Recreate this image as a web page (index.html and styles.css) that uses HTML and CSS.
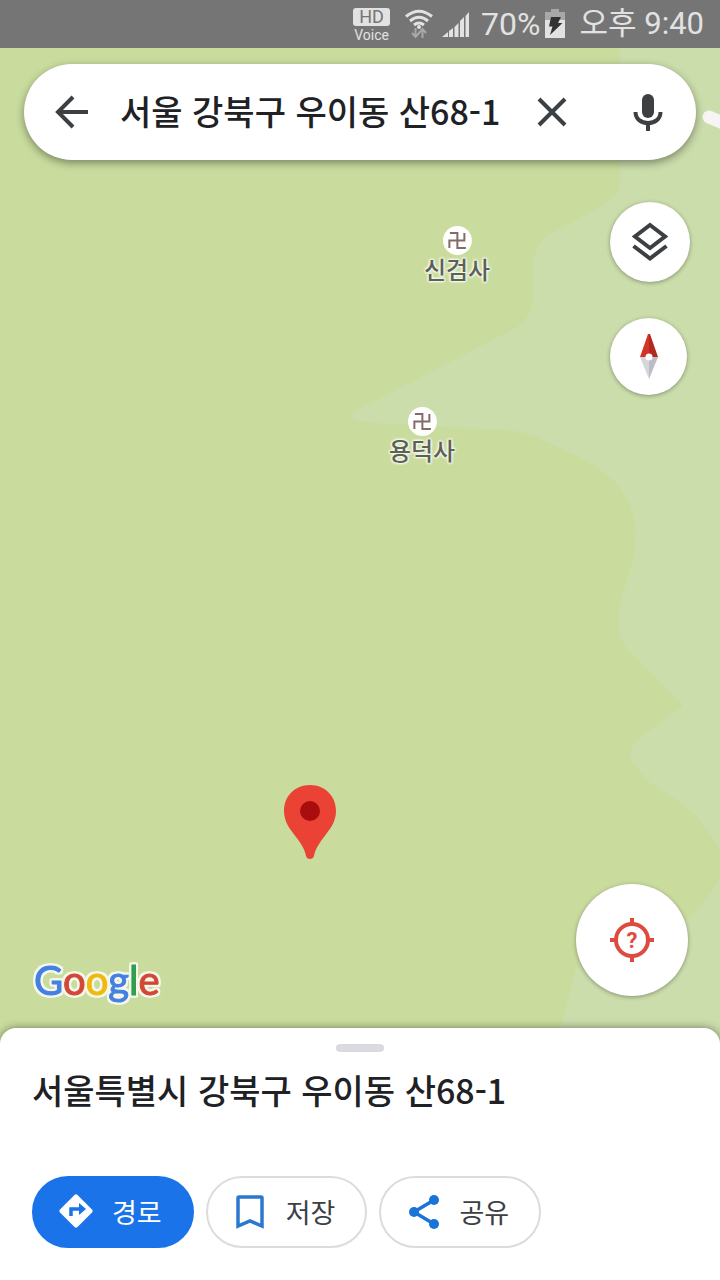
FILE: index.html
```html
<!DOCTYPE html>
<html lang="ko">
<head>
<meta charset="UTF-8" />
<meta name="viewport" content="width=device-width, initial-scale=1.0"/>
<title>서울 강북구 우이동 산68-1</title>
<link rel="stylesheet" href="styles.css">
</head>
<body>

<header class="status-bar">
    <div class="hd-voice">
        <span class="hd">HD</span>
        <span class="voice">Voice</span>
    </div>
    <svg class="status-wifi" viewBox="0 0 30 32" width="30" height="32" aria-hidden="true">
        <g fill="none" stroke="#e2e2e2" stroke-width="3">
            <path d="M2 8.500Q15 -2 28 8.500"/>
            <path d="M6 13Q15 5.500 24 13"/>
            <path d="M10 17Q15 13 20 17"/>
        </g>
        <circle cx="15" cy="19" r="2" fill="#e2e2e2"/>
        <path d="M11.500 20v8M8 25l3.500 4 3.500-4M18.500 30v-8M15 25l3.500-4 3.500 4" fill="none" stroke="#a8a8a8" stroke-width="2"/>
    </svg>
    <svg class="status-signal" viewBox="0 0 28 28" width="28" height="28" aria-hidden="true">
        <path d="M0 27l6-5v5zM7 21l4-3v9H7zM12.500 17l4-4v14h-4zM18 11l4-4v20h-4zM23.500 6L27 2v25h-3.500z" fill="#e2e2e2"/>
    </svg>
    <span>70%</span>
    <svg class="status-battery" viewBox="0 0 20 30" width="20" height="30" aria-hidden="true">
        <path d="M6 0h8v3h6v8H0V3h6z" fill="#a8a8a8"/>
        <path d="M0 11h20v18H0z" fill="#e2e2e2"/>
        <path d="M6 8h10l-3 6h4.500L5 26l2.500-8.500H4z" fill="#333"/>
    </svg>
    <span class="status-time">오후 9:40</span>
</header>

<main class="map">
    <svg class="map-terrain" viewBox="0 48 720 1000" preserveAspectRatio="xMidYMid slice" aria-hidden="true">
        <rect y="48" width="720" height="1000" fill="#c9dc9e"/>
        <path d="M620 48V178Q622 196 600 207L560 229Q532 240 533 270C534 300 536 318 510 331L350 414Q348 420 375 423L480 429Q525 428 545 441L585 460Q630 484 635 525C639 565 619 590 618 620Q616 638 632 653L683 706 645 734Q623 748 634 764L650 783Q692 808 704 825L720 850V48Z" fill="#cbddab"/>
        <path d="M720 878Q708 900 690 917Q640 950 576 968L556 1048H720Z" fill="#cbddab"/>
        <path d="M709 117l14 6" stroke="#f7f4f4" stroke-width="13" stroke-linecap="round"/>
    </svg>

    <div class="place place-singeomsa">
        <svg viewBox="0 0 29 29" width="29" height="29" aria-hidden="true">
            <circle cx="14.500" cy="14.500" r="14.500" fill="#fff"/>
            <path d="M7 7h7.500v15H23M6.500 22v-7.500h15V7" fill="none" stroke="#836b68" stroke-width="2"/>
        </svg>
        <span>신검사</span>
    </div>
    <div class="place place-yongdeoksa">
        <svg viewBox="0 0 29 29" width="29" height="29" aria-hidden="true">
            <circle cx="14.500" cy="14.500" r="14.500" fill="#fff"/>
            <path d="M7 7h7.500v15H23M6.500 22v-7.500h15V7" fill="none" stroke="#836b68" stroke-width="2"/>
        </svg>
        <span>용덕사</span>
    </div>

    <svg class="pin" viewBox="0 0 54 76" width="54" height="76" aria-hidden="true">
        <path d="M27 1C12 1 1 12 1 27c0 11 6 18 12 26 6 8 9 13 10 19 1 4 7 4 8 0 1-6 4-11 10-19 6-8 12-15 12-26C53 12 42 1 27 1z" fill="#ea4335"/>
        <circle cx="27" cy="27" r="10" fill="#a90d0d"/>
    </svg>

    <form class="search">
        <button class="icon-button" type="button" aria-label="뒤로">
            <svg viewBox="0 0 34 34" width="34" height="34"><path d="M33 17H3M18 2L3 17l15 15" fill="none" stroke="#3c4043" stroke-width="4"/></svg>
        </button>
        <input class="search-input" type="text" aria-label="검색" value="서울 강북구 우이동 산68-1">
        <button class="icon-button" type="button" aria-label="지우기">
            <svg viewBox="0 0 30 30" width="30" height="30"><path d="M2 2l26 26M28 2L2 28" stroke="#3c4043" stroke-width="4"/></svg>
        </button>
        <button class="icon-button" type="button" aria-label="음성 검색">
            <svg viewBox="0 0 30 40" width="30" height="40">
                <rect x="9" y="2" width="12" height="24" rx="6" fill="#3c4043"/>
                <path d="M2.500 20c0 7 5.500 11 12.500 11s12.500-4 12.500-11M15 31v8" fill="none" stroke="#3c4043" stroke-width="4"/>
            </svg>
        </button>
    </form>

    <div class="map-controls">
        <button class="round-button layers" type="button" aria-label="레이어">
            <svg viewBox="0 0 36 40" width="36" height="40">
                <path d="M18 3l15 11.500L18 26 3 14.500zM1.500 24L18 36.500 34.500 24" fill="none" stroke="#3c4043" stroke-width="4"/>
            </svg>
        </button>
        <button class="round-button compass" type="button" aria-label="나침반">
            <svg viewBox="0 0 20 48" width="20" height="48">
                <path d="M9 1L1 24h9V1z" fill="#d33426"/>
                <path d="M10 1h1l8 23h-9z" fill="#b3291f"/>
                <path d="M1 24h9v22z" fill="#d5d5dc"/>
                <path d="M10 24h9l-9 22z" fill="#bcbcc4"/>
                <circle cx="10" cy="24" r="3.500" fill="#fff"/>
            </svg>
        </button>
    </div>

    <div class="map-footer">
        <div class="logo" aria-label="Google"><span class="blue">G</span><span class="red">o</span><span class="yellow">o</span><span class="blue">g</span><span class="green">l</span><span class="red">e</span></div>
        <button class="round-button locate" type="button" aria-label="내 위치">
            <svg viewBox="0 0 44 44" width="44" height="44">
                <circle cx="22" cy="22" r="16" fill="none" stroke="#dd4b3e" stroke-width="4"/>
                <path d="M22 0v6M22 38v6M0 22h6M38 22h6" stroke="#dd4b3e" stroke-width="4"/>
                <text class="locate-mark" x="22" y="30" text-anchor="middle">?</text>
            </svg>
        </button>
    </div>
</main>

<section class="sheet">
    <div class="handle"></div>
    <h1>서울특별시 강북구 우이동 산68-1</h1>
    <div class="actions">
        <button class="action primary" type="button">
            <svg viewBox="0 0 40 40" width="40" height="40" aria-hidden="true">
                <path d="M18.500 4q1.500-1.500 3 0l14.500 14.500q1.500 1.500 0 3l-14.500 14.500q-1.500 1.500-3 0l-14.500-14.500q-1.500-1.500 0-3z" fill="#fff"/>
                <path d="M15 25v-7h9" fill="none" stroke="#1a73e8" stroke-width="3.500"/>
                <path d="M23 12l7 6-7 6z" fill="#1a73e8"/>
            </svg>
            경로
        </button>
        <button class="action" type="button">
            <svg viewBox="0 0 40 40" width="40" height="40" aria-hidden="true">
                <path d="M8 35V7q0-1 1-1h22q1 0 1 1v28l-12-5z" fill="none" stroke="#2b78cf" stroke-width="3.500"/>
            </svg>
            저장
        </button>
        <button class="action" type="button">
            <svg viewBox="0 0 40 40" width="40" height="40" aria-hidden="true">
                <path d="M31 9L11 21l20 12" fill="none" stroke="#1a73d8" stroke-width="3.500"/>
                <g fill="#1a73d8"><circle cx="31" cy="9" r="5"/><circle cx="11" cy="21" r="5"/><circle cx="31" cy="33" r="5"/></g>
            </svg>
            공유
        </button>
    </div>
</section>

</body>
</html>
```
FILE: styles.css
```css
:root {
    --font-family: 'Noto Sans CJK KR', sans-serif;
    --text-color: #202124;
    --border-color: #dadce0;
    --blue: #1a73e8;
    --status-bg: #757575;
    --status-text: #e2e2e2;
    --halo: #f4f7ea;
}

* {
    box-sizing: border-box;
}

body {
    font-family: var(--font-family);
    margin: 0;
    min-height: 100vh;
    display: flex;
    flex-direction: column;
    background: #fff;
    color: var(--text-color);
}

svg {
    display: block;
    flex-shrink: 0;
}

button {
    font-family: inherit;
    border: none;
    padding: 0;
    cursor: pointer;
}

/* Status bar */
.status-bar {
    display: flex;
    align-items: center;
    justify-content: flex-end;
    height: 48px;
    padding: 0 16px;
    background: var(--status-bg);
    color: var(--status-text);
    font-family: Roboto, 'Noto Sans CJK KR', sans-serif;
    font-size: 32px;
    line-height: 48px;
    white-space: nowrap;
}

.hd-voice {
    display: flex;
    flex-direction: column;
    align-items: center;
    gap: 1px;
    margin-right: 14px;
    padding-top: 2px;
}

.hd {
    width: 37px;
    border-radius: 3px;
    background: var(--status-text);
    color: var(--status-bg);
    font-size: 18px;
    line-height: 18px;
    text-align: center;
}

.voice {
    font-size: 14px;
    line-height: 16px;
}

.status-wifi {
    margin-right: 8px;
}

.status-signal {
    margin-right: 11px;
}

.status-battery {
    margin: 0 14px 0 5px;
}

.status-time {
    font-size: 31px;
}

/* Map */
.map {
    position: relative;
    flex: 1;
    display: flex;
    flex-direction: column;
    min-height: 800px;
    padding: 16px 24px 52px;
    background: #c9dc9e;
}

.map-terrain {
    position: absolute;
    inset: 0;
    width: 100%;
    height: 100%;
}

.place {
    position: absolute;
    display: flex;
    flex-direction: column;
    align-items: center;
    transform: translateX(-50%);
    color: #5c6156;
    font-size: 24px;
    font-weight: 500;
    line-height: 28px;
    text-shadow: 0 0 2px var(--halo), 1px 1px 2px var(--halo), -1px -1px 2px var(--halo), 1px -1px 2px var(--halo), -1px 1px 2px var(--halo);
}

.place-singeomsa {
    left: 457px;
    top: 178px;
}

.place-yongdeoksa {
    left: 422px;
    top: 359px;
}

.pin {
    position: absolute;
    left: 283px;
    top: 736px;
}

.search {
    position: relative;
    display: flex;
    align-items: center;
    height: 96px;
    border-radius: 48px;
    background: #fff;
    box-shadow: 0 3px 8px rgba(0, 0, 0, 0.4);
}

.icon-button {
    display: flex;
    align-items: center;
    justify-content: center;
    flex-shrink: 0;
    width: 96px;
    height: 96px;
    background: none;
}

.search-input {
    flex: 1;
    min-width: 0;
    height: 52px;
    padding: 0 0 4px;
    border: none;
    outline: none;
    background: none;
    color: var(--text-color);
    font-family: inherit;
    font-size: 34px;
    font-weight: 500;
}

.round-button {
    display: flex;
    align-items: center;
    justify-content: center;
    border-radius: 50%;
    background: #fff;
    box-shadow: 0 1px 4px rgba(0, 0, 0, 0.35);
}

.map-controls {
    position: relative;
    align-self: flex-end;
    display: flex;
    flex-direction: column;
    gap: 36px;
    margin: 42px 6px 0 0;
}

.layers {
    width: 80px;
    height: 80px;
}

.compass {
    width: 77px;
    height: 77px;
}

.map-footer {
    position: relative;
    display: flex;
    align-items: flex-end;
    justify-content: space-between;
    margin-top: auto;
    padding: 0 8px;
}

.logo {
    font-family: Lato, sans-serif;
    font-size: 40px;
    line-height: 48px;
    margin-bottom: -8px;
    padding-left: 2px;
    -webkit-text-stroke: 1px currentColor;
    filter: drop-shadow(2px 0 0 var(--halo)) drop-shadow(-2px 0 0 var(--halo)) drop-shadow(0 2px 0 var(--halo)) drop-shadow(0 -2px 0 var(--halo));
}

.logo .blue { color: #4480e3; }
.logo .red { color: #d14836; }
.logo .yellow { color: #f0b90f; }
.logo .green { color: #2f9e4f; }

.locate {
    width: 112px;
    height: 112px;
}

.locate-mark {
    fill: #dd4b3e;
    font-family: Roboto, sans-serif;
    font-size: 22px;
    font-weight: 700;
}

/* Bottom sheet */
.sheet {
    position: relative;
    margin-top: -20px;
    padding: 16px 32px 32px;
    border-radius: 16px 16px 0 0;
    background: #fff;
    box-shadow: 0 0 8px rgba(0, 0, 0, 0.45);
}

.handle {
    width: 48px;
    height: 8px;
    margin: 0 auto;
    border-radius: 4px;
    background: #dadae0;
}

h1 {
    margin: 12px 0 60px;
    font-size: 34px;
    font-weight: 500;
    line-height: 52px;
}

.actions {
    display: flex;
    flex-wrap: wrap;
    gap: 12px;
}

.action {
    display: flex;
    align-items: center;
    gap: 16px;
    height: 72px;
    padding: 0 30px 2px 22px;
    border: 2px solid var(--border-color);
    border-radius: 36px;
    background: #fff;
    color: #3c4043;
    font-size: 27px;
}

.action.primary {
    border-color: var(--blue);
    background: var(--blue);
    color: #fff;
}
```
